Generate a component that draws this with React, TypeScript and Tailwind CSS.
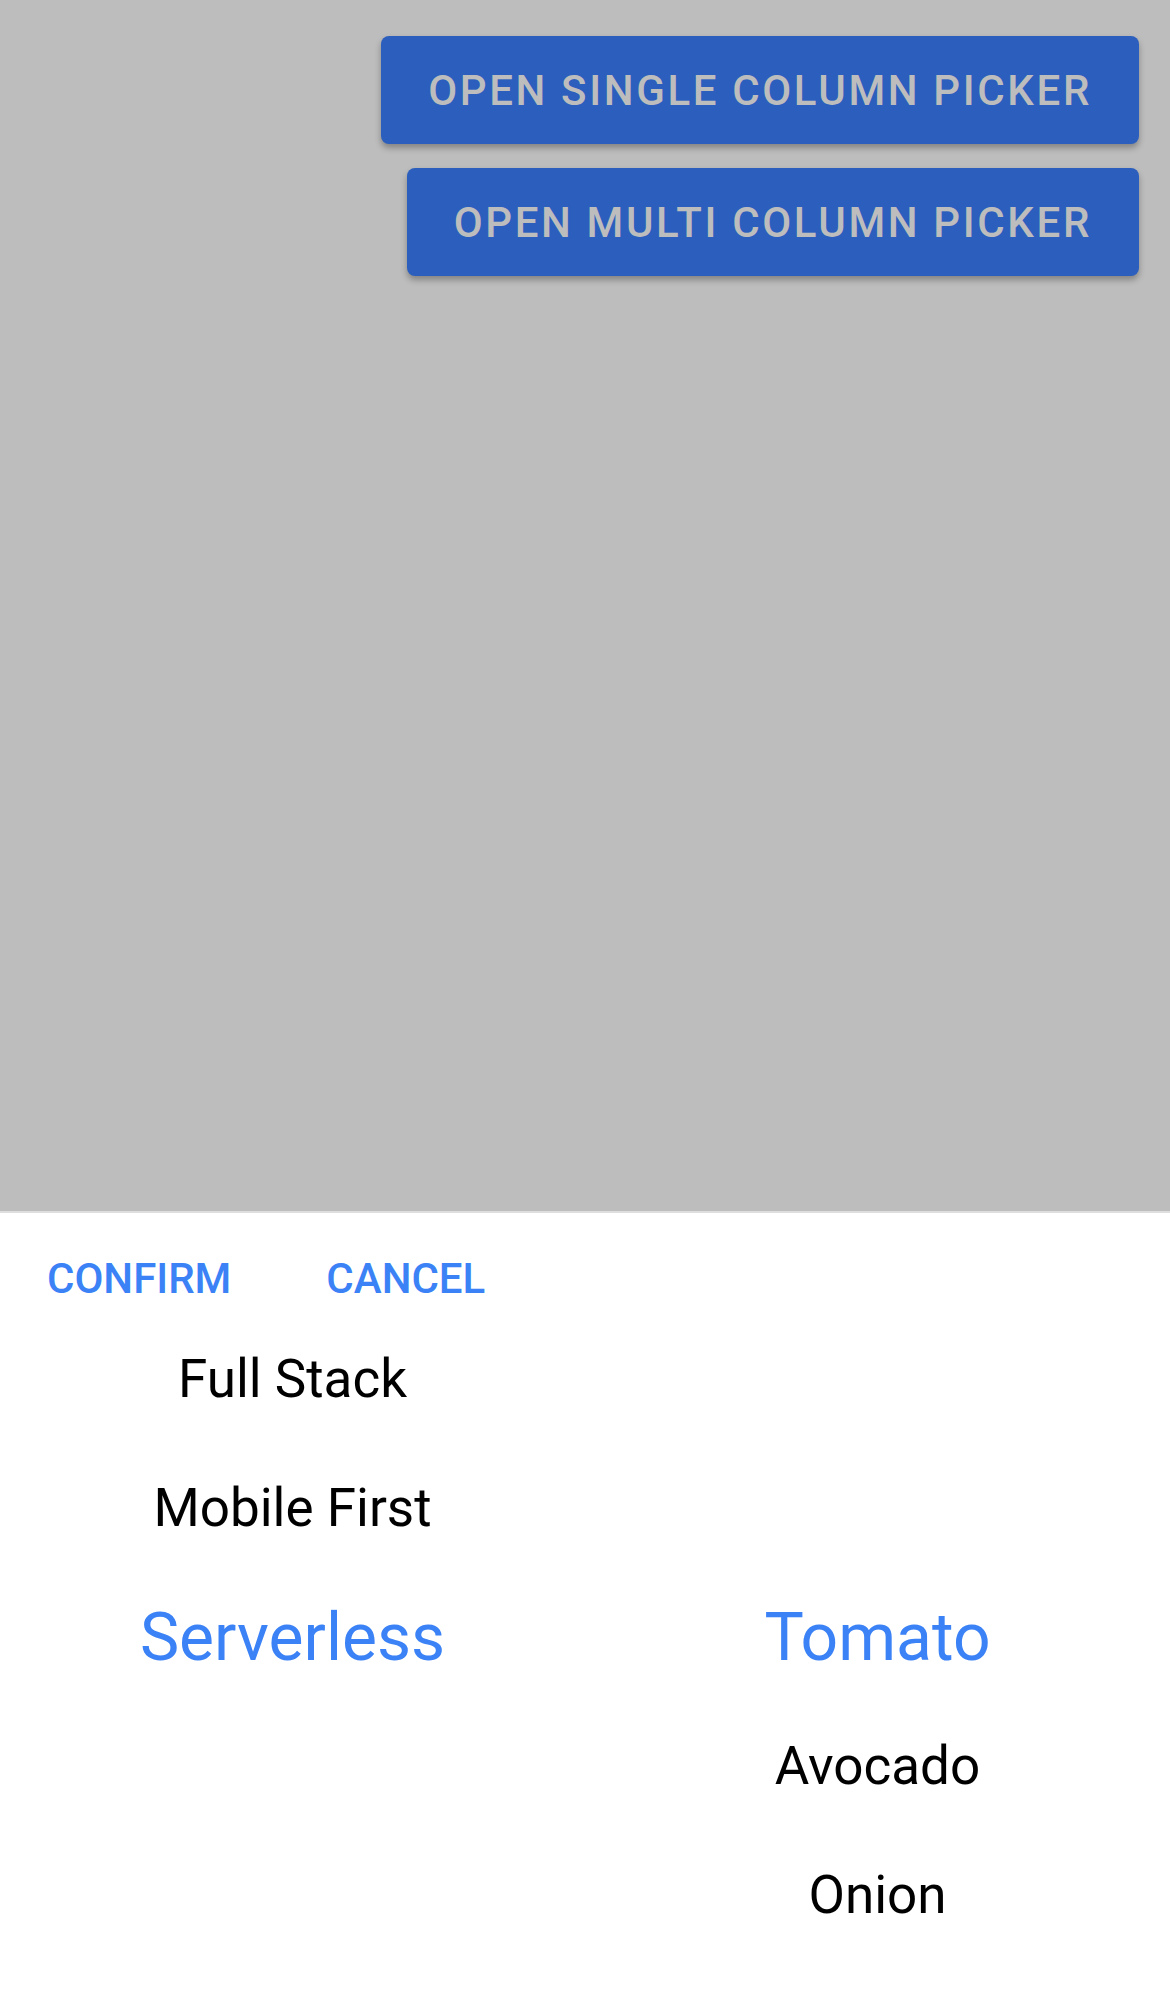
import React from "react";

const left = ["Full Stack", "Mobile First", "Serverless", "", ""];
const right = ["", "", "Tomato", "Avocado", "Onion"];

const Column = ({ items }: { items: string[] }) => (
  <div className="flex flex-1 flex-col">
    {items.map((it, i) => (
      <div key={i} className="flex h-[129px] items-center justify-center">
        <span
          className={
            i === 2
              ? "text-[66px] leading-none text-[#3b82f6]"
              : "text-[53px] leading-none text-black"
          }
        >
          {it}
        </span>
      </div>
    ))}
  </div>
);

export default function App() {
  return (
    <div
      className="flex h-[1992px] w-full flex-col bg-[#bdbdbd]"
      style={{ fontFamily: "Roboto, 'Noto Sans', sans-serif" }}
    >
      <div className="flex flex-col items-end gap-[24px] pr-[31px] pt-[36px]">
        <button className="h-[108px] rounded-[8px] bg-[#2c5fbd] px-[47px] text-[42px] font-medium uppercase tracking-[0.063em] text-[#bdbdbd] shadow-[0_4px_6px_rgba(0,0,0,0.3)]">
          Open single column picker
        </button>
        <button className="h-[108px] rounded-[8px] bg-[#2c5fbd] px-[47px] text-[42px] font-medium uppercase tracking-[0.063em] text-[#bdbdbd] shadow-[0_4px_6px_rgba(0,0,0,0.3)]">
          Open multi column picker
        </button>
      </div>
      <div className="flex-1" />
      <div className="h-[781px] border-t-2 border-[#dedede] bg-white">
        <div className="flex h-[102px] items-center gap-[95px] pl-[47px] pt-[28px]">
          <span className="text-[42px] font-medium text-[#3b82f6]">CONFIRM</span>
          <span className="text-[42px] font-medium text-[#3b82f6]">CANCEL</span>
        </div>
        <div className="flex">
          <Column items={left} />
          <Column items={right} />
        </div>
      </div>
    </div>
  );
}
